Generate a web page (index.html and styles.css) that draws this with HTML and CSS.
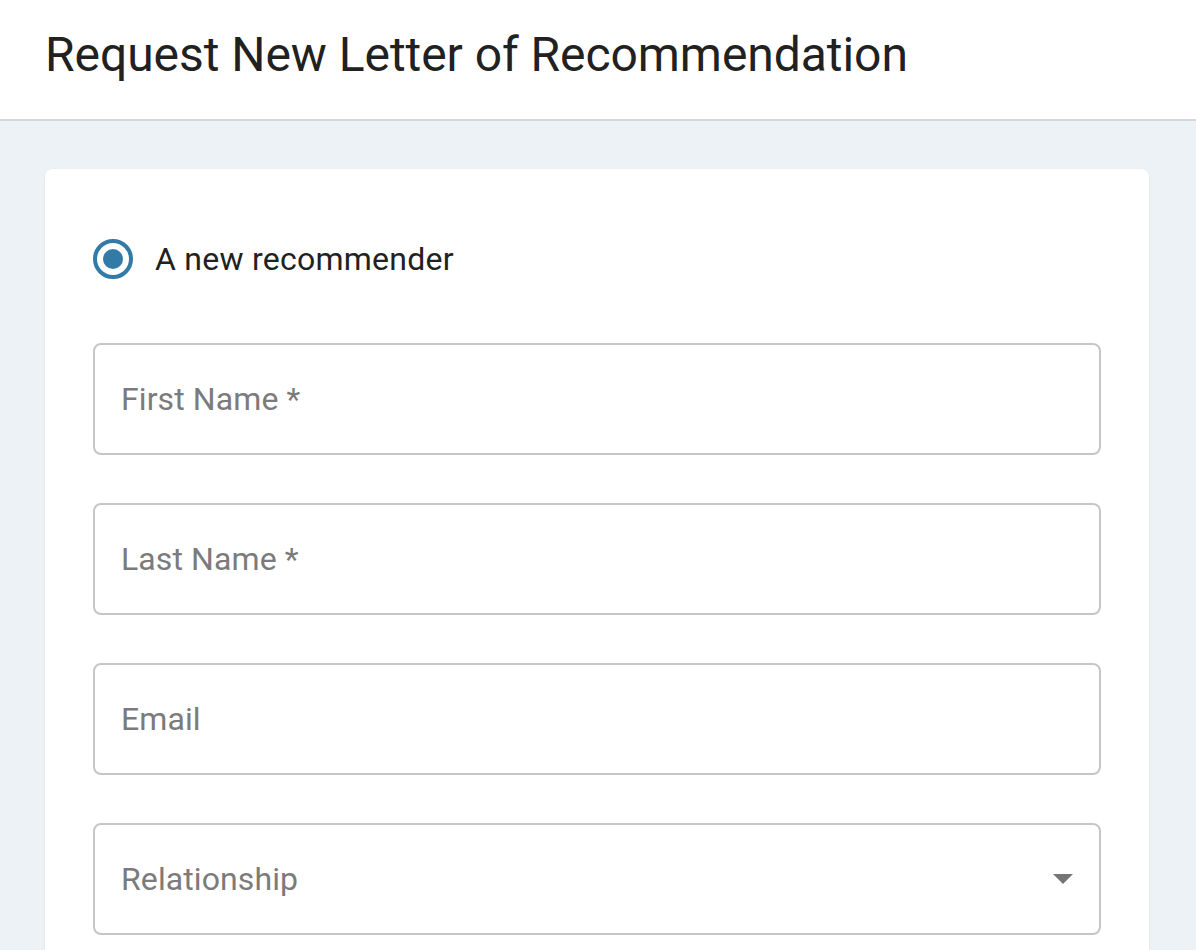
FILE: index.html
```html
<!DOCTYPE html>
<html lang="en">
<head>
<meta charset="utf-8">
<title>Request New Letter of Recommendation</title>
<link rel="stylesheet" href="styles.css">
</head>
<body>
<header class="page-header">
  <h1 class="page-title">Request New Letter of Recommendation</h1>
</header>
<main class="page-body">
  <section class="card">
    <label class="radio-option">
      <span class="radio"><span class="radio-dot"></span></span>
      <span class="radio-label">A new recommender</span>
    </label>
    <div class="fields">
      <div class="field"><span class="placeholder">First Name *</span></div>
      <div class="field"><span class="placeholder">Last Name *</span></div>
      <div class="field"><span class="placeholder">Email</span></div>
      <div class="field field-select">
        <span class="placeholder">Relationship</span>
        <span class="caret"></span>
      </div>
    </div>
  </section>
</main>
</body>
</html>
```
FILE: styles.css
```css
* { box-sizing: border-box; }
html, body { margin: 0; padding: 0; }
body {
  font-family: Roboto, "Liberation Sans", Arial, sans-serif;
  background: #edf2f6;
  color: #212121;
  height: 950px;
  overflow: hidden;
}
.page-header {
  background: #fff;
  height: 121px;
  border-bottom: 2px solid #d3d8db;
  display: flex;
  align-items: center;
  padding: 0 0 10px 45px;
}
.page-title {
  margin: 0;
  font-size: 48px;
  font-weight: 400;
  color: #212121;
  letter-spacing: -0.05px;
}
.page-body {
  padding: 48px 47px 0 45px;
}
.card {
  background: #fff;
  border-radius: 8px;
  box-shadow: 0 1px 3px rgba(0,0,0,0.08);
  padding: 70px 48px 0;
  height: 800px;
}
.radio-option {
  display: flex;
  align-items: center;
  gap: 22px;
  height: 40px;
}
.radio {
  width: 40px;
  height: 40px;
  border: 4px solid #337ba7;
  border-radius: 50%;
  display: flex;
  align-items: center;
  justify-content: center;
}
.radio-dot {
  width: 20px;
  height: 20px;
  border-radius: 50%;
  background: #337ba7;
}
.radio-label {
  font-size: 32px;
  letter-spacing: 0.25px;
  color: #212121;
}
.fields {
  margin-top: 64px;
  display: flex;
  flex-direction: column;
  gap: 48px;
}
.field {
  flex: none;
  height: 112px;
  border: 2px solid #c6c6c6;
  border-radius: 8px;
  display: flex;
  align-items: center;
  padding: 0 26px;
}
.placeholder {
  font-size: 32px;
  letter-spacing: 0.1px;
  color: #7b7b7b;
}
.field-select {
  justify-content: space-between;
}
.caret {
  width: 0;
  height: 0;
  border-left: 10px solid transparent;
  border-right: 10px solid transparent;
  border-top: 10px solid #757575;
}
```
